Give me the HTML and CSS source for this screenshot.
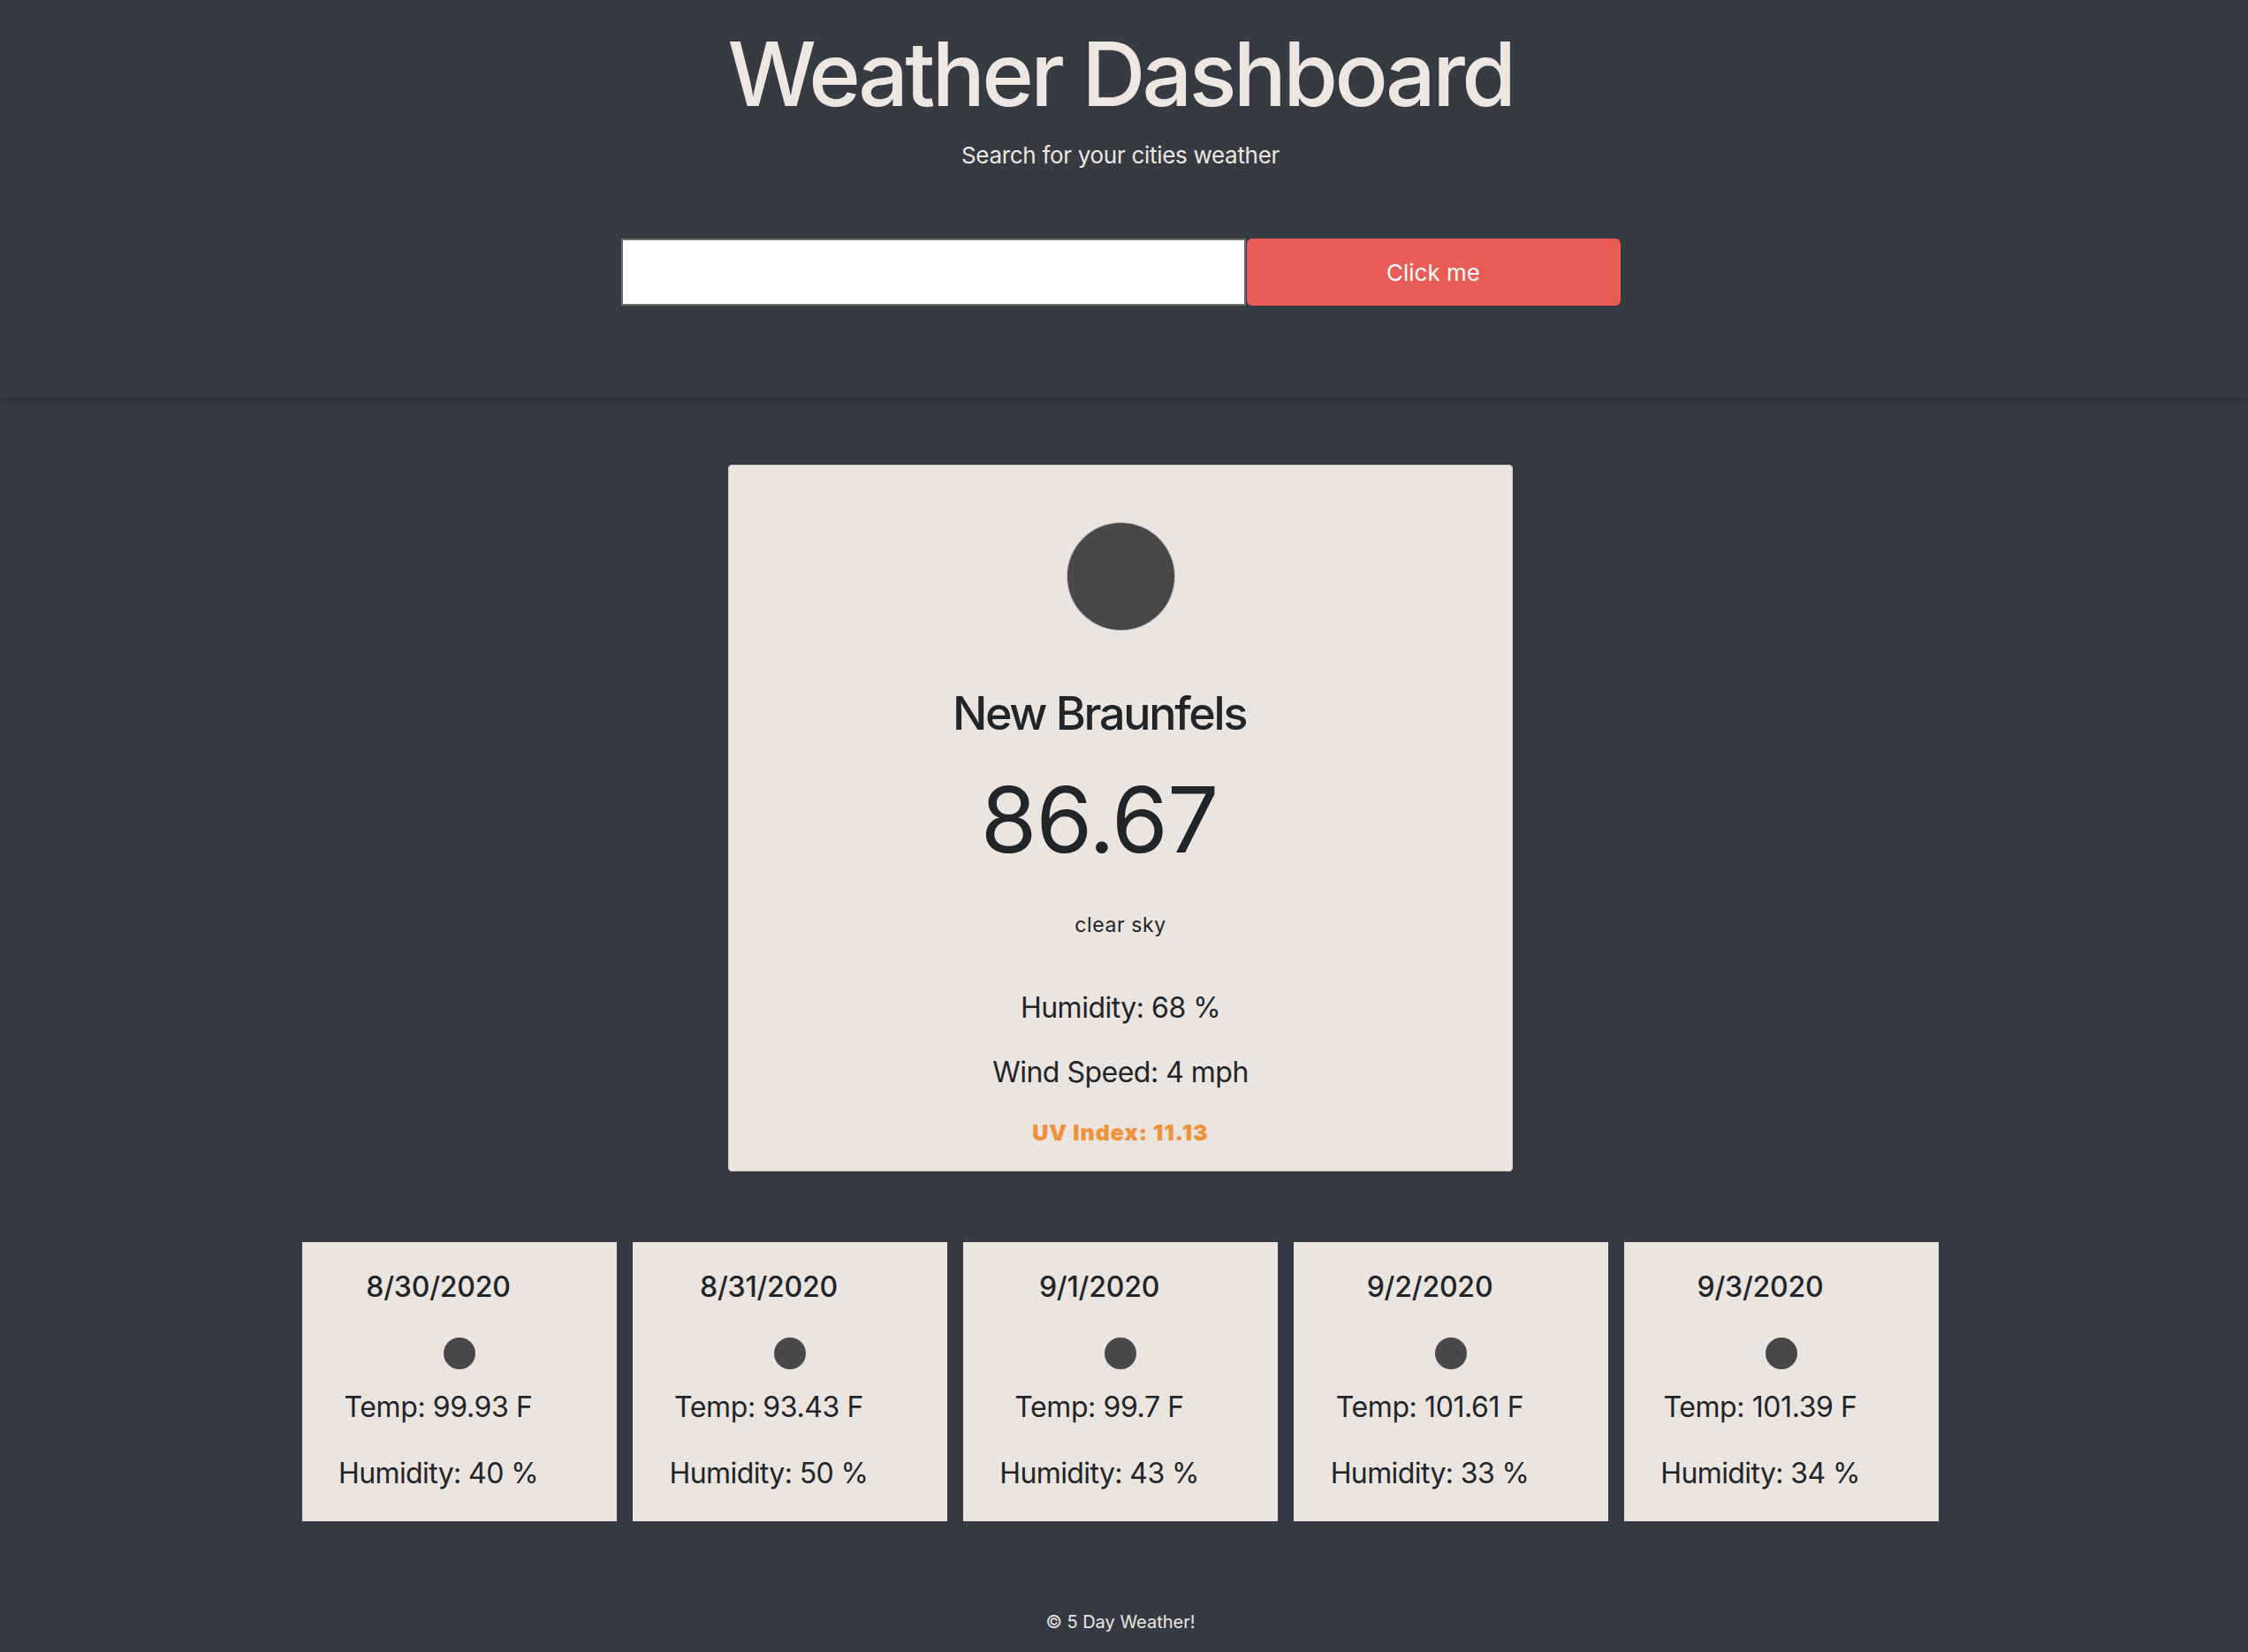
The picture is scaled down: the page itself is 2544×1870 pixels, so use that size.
FILE: index.html
```html
<!DOCTYPE html>
<html lang="en">
<head>
<meta charset="utf-8">
<title>Weather Dashboard</title>
<link rel="stylesheet" href="styles.css">
</head>
<body>
  <header class="hero">
    <h1 class="hero-title">Weather Dashboard</h1>
    <p class="hero-sub">Search for your cities weather</p>
    <form class="search">
      <input class="search-input" type="text" aria-label="City">
      <button class="search-btn" type="button">Click me</button>
    </form>
  </header>

  <main class="content">
    <section class="today">
      <div class="icon-big"></div>
      <h2 class="city">New Braunfels</h2>
      <div class="temp">86.67</div>
      <p class="desc">clear sky</p>
      <p class="stat stat-first">Humidity: 68 %</p>
      <p class="stat">Wind Speed: 4 mph</p>
      <p class="uv">UV Index: 11.13</p>
    </section>

    <section class="forecast">
      <div class="day">
        <h3 class="day-date">8/30/2020</h3>
        <div class="icon-small"></div>
        <p class="day-temp">Temp: 99.93 F</p>
        <p class="day-hum">Humidity: 40 %</p>
      </div>
      <div class="day">
        <h3 class="day-date">8/31/2020</h3>
        <div class="icon-small"></div>
        <p class="day-temp">Temp: 93.43 F</p>
        <p class="day-hum">Humidity: 50 %</p>
      </div>
      <div class="day">
        <h3 class="day-date">9/1/2020</h3>
        <div class="icon-small"></div>
        <p class="day-temp">Temp: 99.7 F</p>
        <p class="day-hum">Humidity: 43 %</p>
      </div>
      <div class="day">
        <h3 class="day-date">9/2/2020</h3>
        <div class="icon-small"></div>
        <p class="day-temp">Temp: 101.61 F</p>
        <p class="day-hum">Humidity: 33 %</p>
      </div>
      <div class="day">
        <h3 class="day-date">9/3/2020</h3>
        <div class="icon-small"></div>
        <p class="day-temp">Temp: 101.39 F</p>
        <p class="day-hum">Humidity: 34 %</p>
      </div>
    </section>
  </main>

  <footer class="footer">
    <p class="footer-text">© 5 Day Weather!</p>
  </footer>
</body>
</html>
```

FILE: styles.css
```css
* { box-sizing: border-box; }

html, body {
  margin: 0;
  padding: 0;
}

body {
  background: #353943;
  font-family: Inter, "Noto Sans", sans-serif;
  color: #212529;
  min-height: 1870px;
  display: flex;
  flex-direction: column;
}

/* Header */
.hero {
  background: #363a43;
  padding: 24px 8px 104px 0;
  display: flex;
  flex-direction: column;
  align-items: center;
  box-shadow: 0 3px 8px rgba(0, 0, 0, 0.2);
  position: relative;
  z-index: 1;
}

.hero-title {
  margin: 0;
  font-size: 100px;
  line-height: 120px;
  font-weight: 500;
  letter-spacing: -3.7px;
  color: #ede6e1;
}

.hero-sub {
  margin: 14px 0 0;
  font-size: 26px;
  line-height: 36px;
  letter-spacing: -0.3px;
  color: #ede6e1;
}

.search {
  margin-top: 76px;
  display: flex;
  gap: 1px;
}

.search-input {
  width: 707px;
  height: 76px;
  margin: 0;
  border: 2px solid #6f6f6f;
  background: #ffffff;
  border-radius: 0;
  font-family: inherit;
  font-size: 26px;
  padding: 0 12px;
}

.search-btn {
  width: 423px;
  height: 76px;
  margin: 0;
  border: none;
  border-radius: 6px;
  background: #e95c55;
  color: #ffffff;
  font-family: inherit;
  font-size: 26px;
  cursor: pointer;
}

/* Main */
.content {
  flex: 1;
  padding: 76px 8px 0 0;
  display: flex;
  flex-direction: column;
  align-items: center;
}

.today {
  width: 888px;
  background: #ebe4df;
  border: 1px solid #d2ccc8;
  border-radius: 4px;
  padding: 65px 0 27px;
  display: flex;
  flex-direction: column;
  align-items: center;
  text-align: center;
}

.icon-big {
  width: 121px;
  height: 121px;
  border-radius: 50%;
  background: #48474a;
  box-shadow: 0 0 0 1px rgba(110, 108, 110, 0.35);
}

.city {
  margin: 64px 0 0;
  padding-right: 48px;
  font-size: 52px;
  line-height: 62px;
  font-weight: 500;
  letter-spacing: -2.3px;
}

.temp {
  margin-top: 27px;
  padding-right: 48px;
  font-size: 103px;
  line-height: 124px;
  font-weight: 400;
  letter-spacing: -1px;
}

.desc {
  margin: 41px 0 0;
  font-size: 23px;
  line-height: 32px;
  letter-spacing: 0.6px;
}

.stat {
  margin: 29px 0 0;
  font-size: 32px;
  line-height: 44px;
  letter-spacing: -0.5px;
}

.stat-first {
  margin-top: 56px;
}

.uv {
  margin: 30px 0 0;
  font-size: 25px;
  line-height: 32px;
  font-weight: 900;
  letter-spacing: 1px;
  color: #f1923b;
}

/* Forecast */
.forecast {
  margin-top: 80px;
  display: flex;
  gap: 18px;
}

.day {
  width: 356px;
  height: 316px;
  background: #ebe4df;
  padding-top: 29px;
  display: flex;
  flex-direction: column;
  align-items: center;
  text-align: center;
}

.day-date {
  margin: 0;
  padding-right: 48px;
  font-size: 32px;
  line-height: 44px;
  font-weight: 500;
  letter-spacing: -0.2px;
}

.icon-small {
  margin-top: 35px;
  width: 36px;
  height: 36px;
  border-radius: 50%;
  background: #48474a;
}

.day-temp,
.day-hum {
  margin: 21px 0 0;
  padding-right: 48px;
  font-size: 32px;
  line-height: 44px;
  letter-spacing: -0.4px;
}

.day-hum {
  margin-top: 31px;
  letter-spacing: -0.6px;
}

/* Footer */
.footer {
  border-top: 1px solid #3a3e47;
  background: #353943;
  padding: 18px 8px 20px 0;
  text-align: center;
}

.footer-text {
  margin: 0;
  font-size: 20px;
  line-height: 28px;
  color: #ede6e1;
}
```
